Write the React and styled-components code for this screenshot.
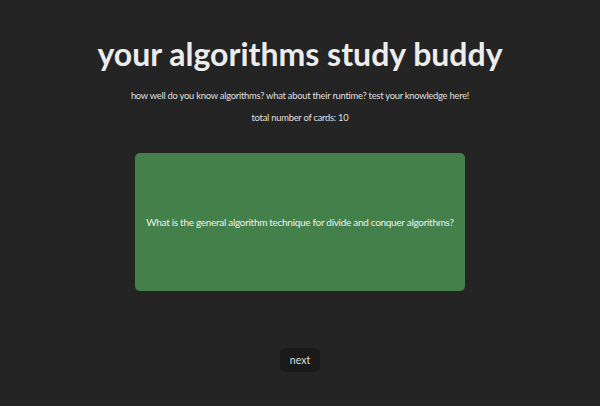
import React from 'react';
import styled, { createGlobalStyle } from 'styled-components';

const GlobalStyle = createGlobalStyle`
  html, body {
    margin: 0;
    padding: 0;
    background-color: #242424;
  }
  body {
    font-family: Lato, "Noto Sans", sans-serif;
    color: rgba(255, 255, 255, 0.87);
  }
`;

const Page = styled.div`
  width: 600px;
  height: 406px;
  display: flex;
  flex-direction: column;
  align-items: center;
  box-sizing: border-box;
  padding-top: 35px;
`;

const Title = styled.h1`
  margin: 0;
  font-size: 32px;
  font-weight: 700;
  line-height: 38px;
  color: #ececec;
`;

const Subtitle = styled.p`
  margin: ${p => p.$top}px 0 0;
  font-size: 9.4px;
  letter-spacing: -0.25px;
  line-height: 14px;
`;

const Card = styled.div`
  margin-top: 28px;
  width: 330px;
  height: 138px;
  background-color: #44804a;
  border-radius: 5px;
  display: flex;
  align-items: center;
  justify-content: center;
  text-align: center;
  white-space: nowrap;
  font-size: 10px;
  letter-spacing: -0.3px;
  color: #f0f0f0;
`;

const NextButton = styled.button`
  margin-top: 57px;
  width: 40px;
  height: 24px;
  border: none;
  border-radius: 6px;
  background-color: #1a1a1a;
  color: rgba(255, 255, 255, 0.87);
  font-family: inherit;
  font-size: 10.5px;
  cursor: pointer;
`;

export default function App() {
  return (
    <>
      <GlobalStyle />
      <Page>
        <Title>your algorithms study buddy</Title>
        <Subtitle $top={16}>
          how well do you know algorithms? what about their runtime? test your knowledge here!
        </Subtitle>
        <Subtitle $top={8}>total number of cards: 10</Subtitle>
        <Card>What is the general algorithm technique for divide and conquer algorithms?</Card>
        <NextButton>next</NextButton>
      </Page>
    </>
  );
}
